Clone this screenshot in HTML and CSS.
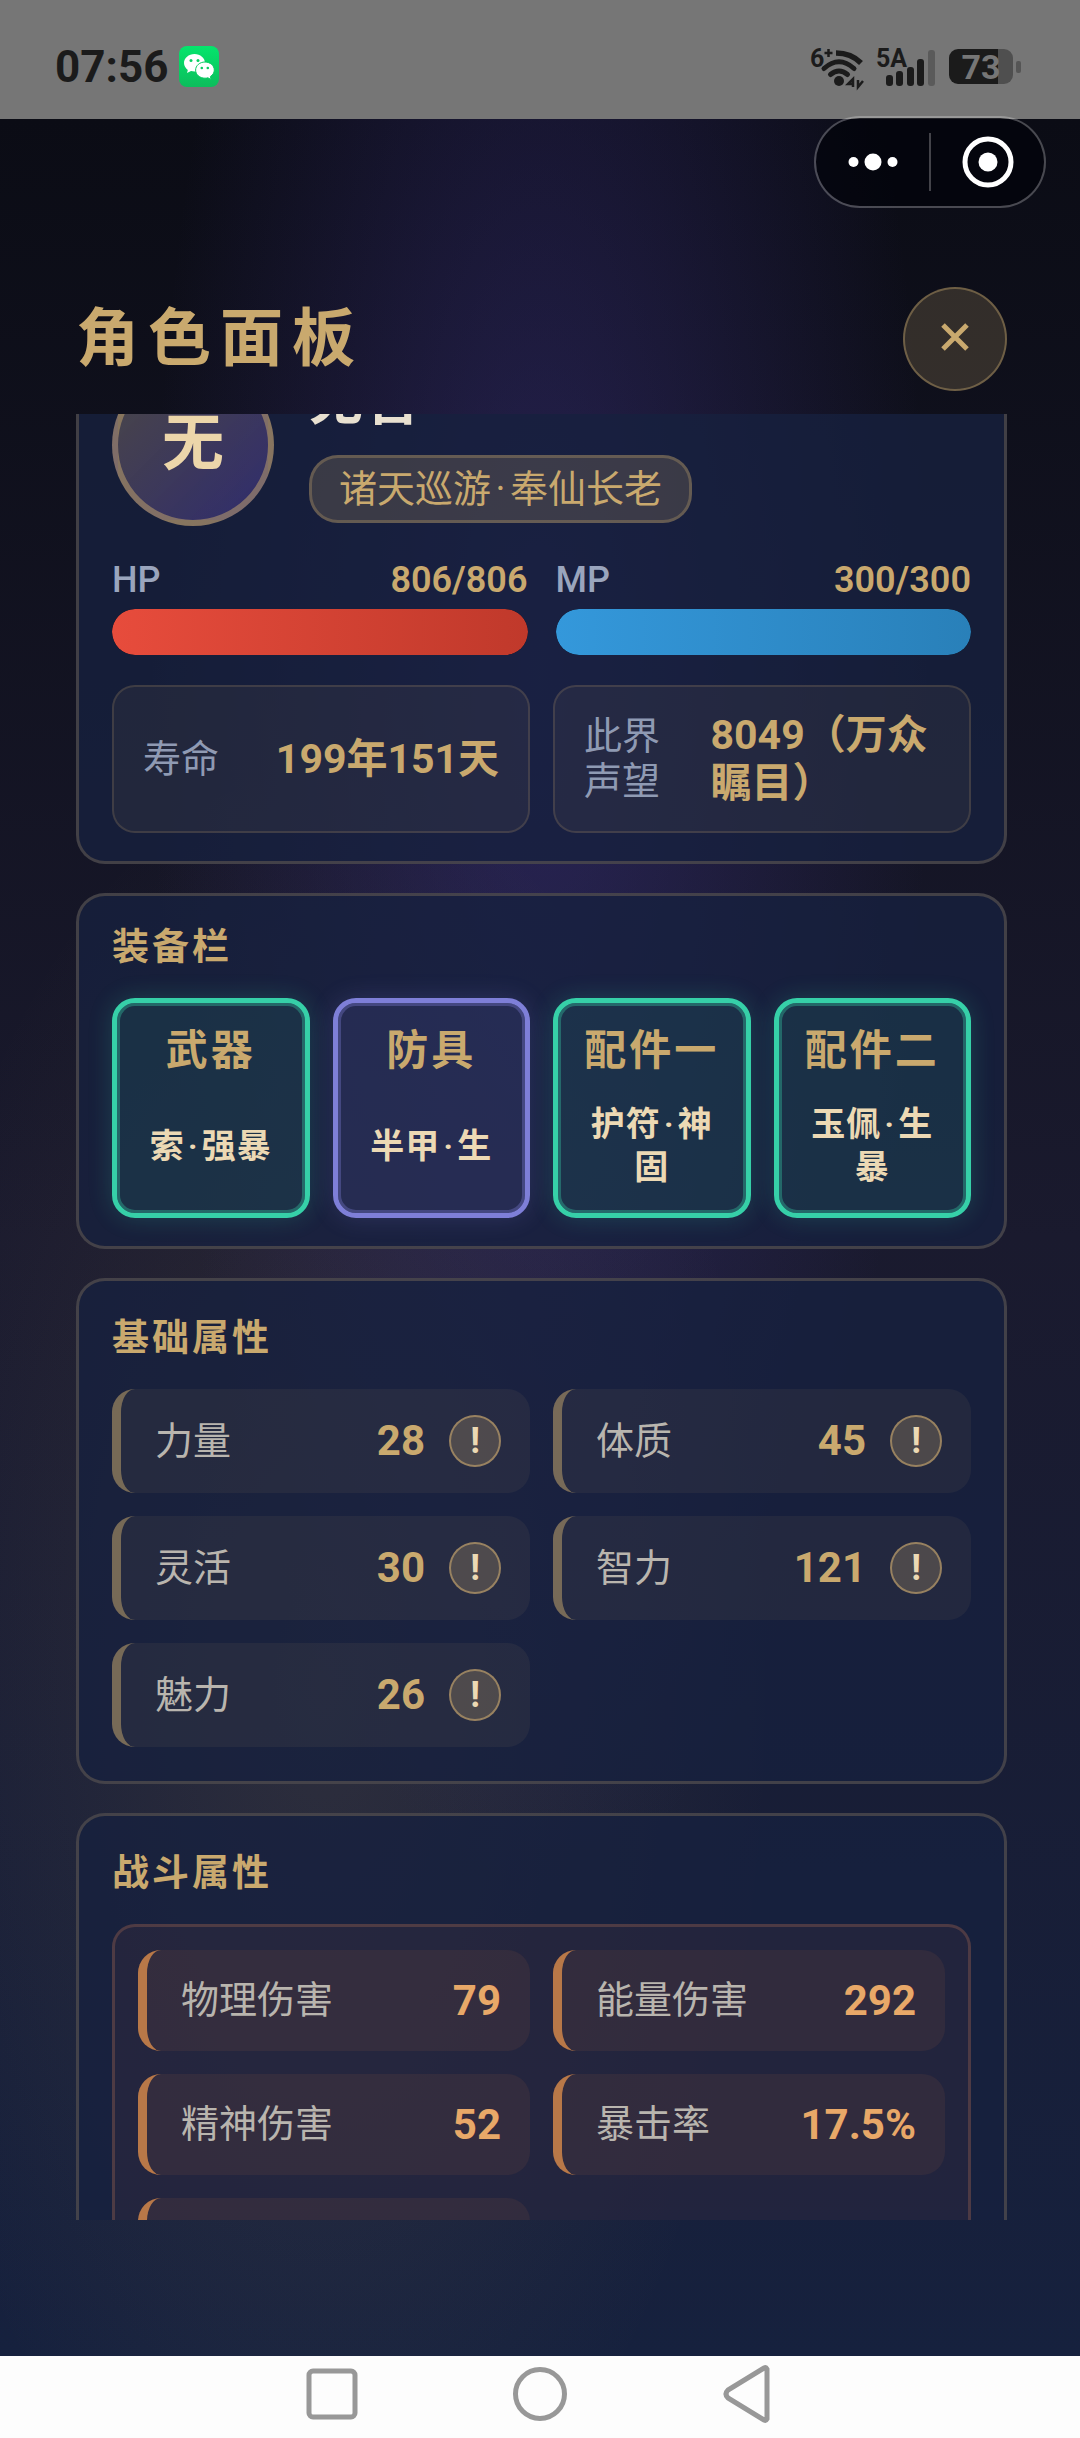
FILE: index.html
```html
<!DOCTYPE html>
<html lang="zh-CN">
<head>
    <meta charset="UTF-8">
    <meta name="viewport" content="width=device-width, initial-scale=1.0">
    <title>角色面板</title>
    <link rel="stylesheet" href="styles.css">
</head>
<body>
    <div class="status-bar">
        <div class="status-left">
            <span class="time">07:56</span>
            <svg class="wechat" width="40" height="41" viewBox="0 0 40 41">
                <defs>
                    <linearGradient id="wx" x1="0" y1="0" x2="0" y2="1">
                        <stop offset="0" stop-color="#05e56c"/>
                        <stop offset="1" stop-color="#0cbd5c"/>
                    </linearGradient>
                </defs>
                <rect width="40" height="41" rx="8" fill="url(#wx)"/>
                <path d="M15.500 8C9.700 8 5 12 5 17c0 2.800 1.500 5.200 3.800 6.900L8 27l4-1.900c1.100.3 2.300.5 3.500.5 5.800 0 10.500-3.900 10.500-8.700S21.300 8 15.500 8z" fill="#fff"/>
                <circle cx="12" cy="14.500" r="1.500" fill="#08d163"/>
                <circle cx="19" cy="14.500" r="1.500" fill="#08d163"/>
                <path d="M26 16c-5.200 0-9.400 3.600-9.400 8.100s4.200 8.100 9.400 8.100c1 0 2-.1 2.900-.4L32 33.500l-.6-3c2.400-1.500 3.900-3.800 3.900-6.400C35.300 19.600 31.200 16 26 16z" fill="#fff" stroke="#08cb61"/>
                <circle cx="22.800" cy="22" r="1.300" fill="#08cb61"/>
                <circle cx="28.800" cy="22" r="1.300" fill="#08cb61"/>
            </svg>
        </div>
        <div class="status-right">
            <svg width="56" height="44" viewBox="0 0 56 44">
                <text x="1" y="22" class="net-label">6</text>
                <g fill="none" stroke="#1b1b1b">
                    <path d="M19.500 4v8M15.500 8h8" stroke-width="2.500"/>
                    <path d="M27 8Q42 8 52 18" stroke-width="5.500"/>
                    <path d="M15 23.500Q30 10 45 23.500" stroke-width="5" stroke-linecap="round"/>
                    <path d="M21.500 29.500q8.500-7 17 0" stroke-width="5" stroke-linecap="round"/>
                    <path d="M44 42V34L39 39h5M49 35v7l5-6" stroke-width="2.500"/>
                </g>
                <circle cx="30" cy="36" r="5" fill="#1b1b1b"/>
            </svg>
            <svg width="60" height="44" viewBox="0 0 60 44">
                <text x="0" y="22" class="net-label">5A</text>
                <g fill="#1b1b1b">
                    <rect x="10" y="30" width="7" height="11" rx="3"/>
                    <rect x="20" y="26" width="7" height="15" rx="3"/>
                    <rect x="31" y="22" width="7" height="19" rx="3"/>
                    <rect x="41" y="14" width="7" height="27" rx="3"/>
                    <rect x="52" y="5" width="7" height="36" rx="3" fill="#5a5a5a"/>
                </g>
            </svg>
            <div class="battery"><span>73</span></div>
        </div>
    </div>

    <div class="capsule">
        <button class="capsule-btn" aria-label="更多">
            <svg width="50" height="18" viewBox="0 0 50 18" fill="#fff">
                <circle cx="5.500" cy="9" r="5"/><circle cx="25" cy="9" r="8.500"/><circle cx="44.500" cy="9" r="5"/>
            </svg>
        </button>
        <span class="capsule-line"></span>
        <button class="capsule-btn" aria-label="关闭小程序">
            <svg width="52" height="52" viewBox="0 0 52 52">
                <circle cx="26" cy="26" r="23" fill="none" stroke="#fff" stroke-width="5"/>
                <circle cx="26" cy="26" r="9.500" fill="#fff"/>
            </svg>
        </button>
    </div>

    <main class="page">
        <header class="header">
            <h1>角色面板</h1>
            <button class="close-btn" aria-label="关闭">
                <svg width="28" height="28" viewBox="0 0 28 28">
                    <path d="M2 2l24 24M26 2L2 26" stroke="currentColor" stroke-width="5"/>
                </svg>
            </button>
        </header>

        <div class="scroll" id="scroll">
            <section class="card">
                <div class="profile">
                    <div class="avatar">无</div>
                    <div>
                        <div class="name">无咎</div>
                        <div class="badge">诸天巡游<i class="dot">·</i>奉仙长老</div>
                    </div>
                </div>
                <div class="bars">
                    <div>
                        <div class="bar-head"><span>HP</span><b>806/806</b></div>
                        <div class="bar"><div class="bar-fill hp" style="width: 100%"></div></div>
                    </div>
                    <div>
                        <div class="bar-head"><span>MP</span><b>300/300</b></div>
                        <div class="bar"><div class="bar-fill mp" style="width: 100%"></div></div>
                    </div>
                </div>
                <div class="grid">
                    <div class="info"><span class="info-label">寿命</span><b>199年151天</b></div>
                    <div class="info"><span class="info-label">此界声望</span><b>8049（万众瞩目）</b></div>
                </div>
            </section>

            <section class="card">
                <h2>装备栏</h2>
                <div class="slots">
                    <div class="slot green"><div class="slot-name">武器</div><div class="slot-item"><span>索<i class="dot">·</i>强暴</span></div></div>
                    <div class="slot purple"><div class="slot-name">防具</div><div class="slot-item"><span>半甲<i class="dot">·</i>生</span></div></div>
                    <div class="slot green"><div class="slot-name">配件一</div><div class="slot-item"><span>护符<i class="dot">·</i>神固</span></div></div>
                    <div class="slot green"><div class="slot-name">配件二</div><div class="slot-item"><span>玉佩<i class="dot">·</i>生暴</span></div></div>
                </div>
            </section>

            <section class="card attrs">
                <h2>基础属性</h2>
                <div class="grid">
                    <div class="attr"><span>力量</span><b>28</b><button class="tip">!</button></div>
                    <div class="attr"><span>体质</span><b>45</b><button class="tip">!</button></div>
                    <div class="attr"><span>灵活</span><b>30</b><button class="tip">!</button></div>
                    <div class="attr"><span>智力</span><b>121</b><button class="tip">!</button></div>
                    <div class="attr"><span>魅力</span><b>26</b><button class="tip">!</button></div>
                </div>
            </section>

            <section class="card attrs">
                <h2>战斗属性</h2>
                <div class="grid combat">
                    <div class="attr"><span>物理伤害</span><b>79</b></div>
                    <div class="attr"><span>能量伤害</span><b>292</b></div>
                    <div class="attr"><span>精神伤害</span><b>52</b></div>
                    <div class="attr"><span>暴击率</span><b>17.5%</b></div>
                    <div class="attr"></div>
                </div>
            </section>
        </div>
    </main>

    <nav class="nav-bar">
        <button aria-label="最近任务">
            <svg width="56" height="58" viewBox="0 0 56 58"><rect x="5" y="6" width="46" height="46" rx="4"/></svg>
        </button>
        <button aria-label="主页">
            <svg width="56" height="58" viewBox="0 0 56 58"><circle cx="28" cy="29" r="24.500"/></svg>
        </button>
        <button aria-label="返回">
            <svg width="56" height="58" viewBox="0 0 56 58"><path d="M47 4v50q-1 2-3 1L8 33q-4-4 0-8L44 3q2-1 3 1z"/></svg>
        </button>
    </nav>

    <script>
        document.getElementById("scroll").scrollTop = 81;
    </script>
</body>
</html>
```
FILE: styles.css
```css
* {
    box-sizing: border-box;
}

body {
    margin: 0;
    height: 100vh;
    display: flex;
    flex-direction: column;
    font-family: Roboto, "Noto Sans CJK SC", sans-serif;
    color: #c9a96e;
}

h1, h2 {
    margin: 0;
}

button {
    padding: 0;
    border: none;
    background: none;
    font-family: inherit;
    color: inherit;
    display: flex;
    align-items: center;
    justify-content: center;
}

/* system status bar */
.status-bar {
    height: 119px;
    padding: 14px 59px 0 55px;
    background: #767676;
    color: #1b1b1b;
    display: flex;
    align-items: center;
    justify-content: space-between;
}

.status-left,
.status-right {
    display: flex;
    align-items: center;
    gap: 11px;
}

.status-right svg {
    overflow: visible;
}

.time {
    font-size: 44px;
    font-weight: 700;
}

.net-label {
    font-size: 25px;
    font-weight: 700;
    fill: #1b1b1b;
}

.battery {
    position: relative;
    width: 64px;
    height: 35px;
    margin-left: 2px;
    margin-right: 8px;
    border-radius: 9px;
    background: linear-gradient(90deg, #1b1b1b 77%, #4f4f4f 77%);
    color: #767676;
    font-size: 34px;
    font-weight: 700;
    line-height: 36px;
    text-align: center;
}

.battery::after {
    content: "";
    position: absolute;
    left: 67px;
    top: 12px;
    width: 5px;
    height: 12px;
    border-radius: 2px;
    background: #555;
}

/* mini program menu */
.capsule {
    position: absolute;
    top: 116px;
    right: 34px;
    width: 232px;
    height: 92px;
    border: 2px solid rgba(255, 255, 255, 0.25);
    border-radius: 46px;
    background: rgba(2, 3, 10, 0.7);
    background-clip: padding-box;
    display: flex;
    align-items: center;
    z-index: 2;
}

.capsule-btn {
    flex: 1;
}

.capsule-line {
    width: 2px;
    height: 58px;
    background: rgba(255, 255, 255, 0.25);
}

.page {
    flex: 1;
    min-height: 0;
    padding: 168px 73px 136px 76px;
    display: flex;
    flex-direction: column;
    background:
        radial-gradient(ellipse at 50% 25%, rgba(72, 60, 160, 0.38) 0%, transparent 51%),
        radial-gradient(ellipse at 30% 70%, rgba(201, 169, 110, 0.12) 0%, transparent 42%),
        linear-gradient(180deg, #0b0c15 0%, #1a1a2e 50%, #16213e 100%);
}

.header {
    display: flex;
    align-items: center;
    justify-content: space-between;
    padding-bottom: 23px;
}

.header h1 {
    font-size: 63px;
    line-height: 92px;
    letter-spacing: 9px;
}

.close-btn {
    width: 104px;
    height: 104px;
    padding-bottom: 4px;
    border: 2px solid rgba(201, 169, 110, 0.4);
    border-radius: 50%;
    background: rgba(201, 169, 110, 0.2);
}

.scroll {
    flex: 1;
    min-height: 0;
    overflow-y: auto;
    scrollbar-width: none;
}

.card {
    margin-bottom: 29px;
    padding: 28px 33px;
    border: 3px solid rgba(201, 169, 110, 0.25);
    border-radius: 29px;
    background: rgba(22, 33, 62, 0.8);
}

.card.attrs {
    padding: 34px 33px;
}

.card h2 {
    margin-bottom: 26px;
    font-size: 37px;
    line-height: 48px;
    letter-spacing: 3px;
}

.dot {
    display: inline-block;
    width: 0.5em;
    font-style: normal;
    text-align: center;
}

/* profile */
.profile {
    display: flex;
    align-items: center;
    gap: 35px;
}

.avatar {
    width: 162px;
    height: 162px;
    border: 6px solid rgba(201, 169, 110, 0.5);
    border-radius: 50%;
    background: linear-gradient(135deg, rgba(201, 169, 110, 0.3), rgba(74, 58, 160, 0.5));
    color: #ecd6aa;
    font-size: 62px;
    font-weight: 700;
    line-height: 148px;
    text-align: center;
}

.name {
    margin-bottom: 18px;
    color: #e8e0d0;
    font-size: 54px;
    font-weight: 700;
    line-height: 70px;
    letter-spacing: 3px;
}

.badge {
    height: 68px;
    padding: 0 27px;
    border: 3px solid rgba(201, 169, 110, 0.3);
    border-radius: 29px;
    background: rgba(201, 169, 110, 0.2);
    font-size: 38px;
    line-height: 62px;
}

.bars {
    display: grid;
    grid-template-columns: 1fr 1fr;
    gap: 28px;
    margin: 32px 0 30px;
}

.bar-head {
    display: flex;
    justify-content: space-between;
    margin-bottom: 7px;
    font-size: 36px;
    line-height: 44px;
}

.bar-head span {
    color: #9aa5bd;
    font-weight: 500;
}

.bar-head b {
    font-weight: 600;
}

.bar {
    height: 46px;
    border-radius: 23px;
    background: rgba(0, 0, 0, 0.4);
    overflow: hidden;
}

.bar-fill {
    height: 100%;
    border-radius: 23px;
}

.hp {
    background: linear-gradient(90deg, #e74c3c, #c0392b);
}

.mp {
    background: linear-gradient(90deg, #3498db, #2980b9);
}

.grid {
    display: grid;
    grid-template-columns: 1fr 1fr;
    gap: 23px;
}

.info {
    display: flex;
    align-items: center;
    justify-content: space-between;
    gap: 24px;
    padding: 24px 29px;
    border: 2px solid rgba(201, 169, 110, 0.18);
    border-radius: 23px;
    background: rgba(201, 169, 110, 0.07);
}

.info-label {
    color: #8f9ab3;
    font-size: 38px;
    line-height: 45px;
}

.info b {
    font-size: 41px;
    line-height: 48px;
}

/* equipment */
.slots {
    display: grid;
    grid-template-columns: repeat(4, 1fr);
    gap: 23px;
}

.slot {
    padding: 18px 23px 2px;
    border: 5px solid;
    border-radius: 23px;
    text-align: center;
}

.slot.green {
    border-color: #36d0a8;
    background: rgba(54, 208, 168, 0.1);
    box-shadow: 0 0 24px rgba(54, 208, 168, 0.2), inset 0 0 0 3px rgba(54, 208, 168, 0.35);
}

.slot.purple {
    border-color: #7e7fd8;
    background: rgba(126, 127, 216, 0.13);
    box-shadow: 0 0 24px rgba(126, 127, 216, 0.2), inset 0 0 0 3px rgba(126, 127, 216, 0.35);
}

.slot-name {
    font-size: 42px;
    font-weight: 700;
    line-height: 60px;
    letter-spacing: 3px;
    white-space: nowrap;
}

.slot-item {
    height: 130px;
    display: flex;
    align-items: center;
    justify-content: center;
    color: #ecd9b4;
    font-size: 34px;
    font-weight: 600;
    line-height: 43px;
    letter-spacing: 1px;
}

/* attributes */
.attr {
    display: flex;
    align-items: center;
    min-height: 104px;
    padding: 0 29px 0 34px;
    border-left: 9px solid rgba(201, 169, 110, 0.5);
    border-radius: 23px;
    background: rgba(201, 169, 110, 0.07);
}

.attr span {
    flex: 1;
    color: #b9b5ae;
    font-size: 38px;
    line-height: 45px;
}

.attr b {
    font-size: 42px;
    line-height: 48px;
}

.tip {
    width: 52px;
    height: 52px;
    margin-left: 24px;
    border: 2px solid rgba(201, 169, 110, 0.6);
    border-radius: 50%;
    background: rgba(201, 169, 110, 0.25);
    color: #ecd9b4;
    font-size: 36px;
    font-weight: 700;
}

.combat {
    padding: 23px;
    border: 3px solid rgba(232, 140, 90, 0.22);
    border-radius: 23px;
    background: rgba(232, 100, 70, 0.06);
}

.combat .attr {
    min-height: 101px;
    border-left-color: #b87848;
    background: rgba(232, 130, 60, 0.08);
}

.combat b {
    color: #e8a868;
}

/* system navigation */
.nav-bar {
    height: 82px;
    padding-bottom: 6px;
    background: #fdfdfd;
    display: flex;
    align-items: center;
    justify-content: center;
    gap: 152px;
}

.nav-bar svg {
    fill: none;
    stroke: #989898;
    stroke-width: 5px;
}
```
